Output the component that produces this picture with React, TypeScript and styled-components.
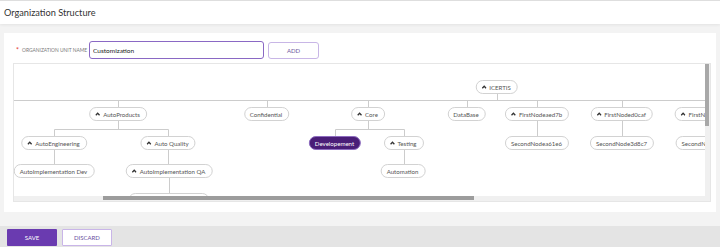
import React, { useLayoutEffect, useRef } from 'react';
import styled, { createGlobalStyle } from 'styled-components';

interface OrgNode {
  id: string;
  label: string;
  x: number;
  level: number;
  parent?: string;
  expandable?: boolean;
  active?: boolean;
}

// top of each tree level inside the chart canvas
const LEVEL_TOP = [16, 43, 72, 100, 129];
const NODE_H = 14;
const CHART_W = 1287;
const CHART_H = 281;
const VIEW_W = 691;
const VIEW_H = 132;
const BAR = 5;
const SCROLL_LEFT = 166;

const nodes: OrgNode[] = [
  { id: 'root', label: 'ICERTIS', x: 648.5, level: 0, expandable: true },
  { id: 'admin', label: 'Administration', x: 95, level: 1, parent: 'root' },
  { id: 'ap', label: 'AutoProducts', x: 270, level: 1, parent: 'root', expandable: true },
  { id: 'conf', label: 'Confidential', x: 418.5, level: 1, parent: 'root' },
  { id: 'core', label: 'Core', x: 520, level: 1, parent: 'root', expandable: true },
  { id: 'db', label: 'DataBase', x: 618.5, level: 1, parent: 'root' },
  { id: 'f1', label: 'FirstNodeaed7b', x: 689, level: 1, parent: 'root', expandable: true },
  { id: 'f2', label: 'FirstNoded0caf', x: 773.5, level: 1, parent: 'root', expandable: true },
  { id: 'f3', label: 'FirstNode5e0b2', x: 859, level: 1, parent: 'root', expandable: true },
  { id: 'f4', label: 'FirstNode7c21f', x: 944, level: 1, parent: 'root', expandable: true },
  { id: 'f5', label: 'FirstNode19be4', x: 1029, level: 1, parent: 'root', expandable: true },
  { id: 'f6', label: 'FirstNode4a6d0', x: 1114, level: 1, parent: 'root', expandable: true },
  { id: 'f7', label: 'FirstNodeb83e1', x: 1199, level: 1, parent: 'root', expandable: true },
  { id: 'ae', label: 'AutoEngineering', x: 206, level: 2, parent: 'ap', expandable: true },
  { id: 'aq', label: 'Auto Quality', x: 320, level: 2, parent: 'ap', expandable: true },
  { id: 'dev', label: 'Developement', x: 487, level: 2, parent: 'core', active: true },
  { id: 'test', label: 'Testing', x: 555.5, level: 2, parent: 'core', expandable: true },
  { id: 's1', label: 'SecondNodea61e6', x: 689, level: 2, parent: 'f1' },
  { id: 's2', label: 'SecondNode3d8c7', x: 774, level: 2, parent: 'f2' },
  { id: 's3', label: 'SecondNode91f3c', x: 859, level: 2, parent: 'f3' },
  { id: 's4', label: 'SecondNode2ad47', x: 944, level: 2, parent: 'f4' },
  { id: 's5', label: 'SecondNode6e0f8', x: 1029, level: 2, parent: 'f5' },
  { id: 's6', label: 'SecondNodec15b9', x: 1114, level: 2, parent: 'f6' },
  { id: 's7', label: 'SecondNode0d7a2', x: 1199, level: 2, parent: 'f7' },
  { id: 'aid', label: 'AutoImplementation Dev', x: 206, level: 3, parent: 'ae' },
  { id: 'aiq', label: 'AutoImplementation QA', x: 321, level: 3, parent: 'aq', expandable: true },
  { id: 'auto', label: 'Automation', x: 555, level: 3, parent: 'test' },
  { id: 'aiu', label: 'AutoImplementation UAT', x: 320.5, level: 4, parent: 'aiq' },
];

const GlobalStyle = createGlobalStyle`
  html, body {
    margin: 0;
    padding: 0;
    background: #f3f3f3;
    font-family: Lato, "Liberation Sans", sans-serif;
    overflow: hidden;
  }
  * { box-sizing: border-box; }
`;

const Page = styled.div`
  width: 720px;
  height: 247px;
  display: flex;
  flex-direction: column;
`;

const Header = styled.header`
  height: 24px;
  border-top: 1px solid #dedede;
  background: #fff;
  box-shadow: 0 1px 3px rgba(0, 0, 0, 0.07);
  padding-left: 4px;
  display: flex;
  align-items: center;
`;

const Title = styled.h1`
  margin: 0;
  font-size: 9.2px;
  font-weight: 400;
  color: #333;
`;

const Card = styled.section`
  margin: 9px 4px 0 4px;
  background: #fff;
  padding: 8px 5px 10px 9px;
  display: flex;
  flex-direction: column;
  gap: 4px;
`;

const FormRow = styled.div`
  display: flex;
  align-items: center;
  padding-left: 3px;
  height: 18px;
`;

const Required = styled.span`
  color: #e53935;
  font-size: 7px;
  margin-right: 3px;
  line-height: 1;
`;

const Label = styled.label`
  font-size: 4.9px;
  color: #7a7a7a;
  text-transform: uppercase;
  margin-right: 2px;
`;

const TextInput = styled.input`
  width: 175px;
  height: 18px;
  border: 1.5px solid #8a68c4;
  border-radius: 3px;
  padding: 0 3px;
  font-family: Lato, sans-serif;
  font-size: 6.5px;
  color: #222;
  outline: none;
`;

const OutlineButton = styled.button<{ $w: number; $h: number }>`
  width: ${(p) => p.$w}px;
  height: ${(p) => p.$h}px;
  background: #fff;
  border: 1px solid #c8b6e6;
  border-radius: 3px;
  color: #6e58a0;
  font-family: Lato, sans-serif;
  font-size: 6px;
  padding: 0;
  margin-left: 4px;
`;

const ChartFrame = styled.div`
  border: 1px solid #e6e6e6;
  display: grid;
  grid-template-columns: ${VIEW_W}px ${BAR}px;
  grid-template-rows: ${VIEW_H}px ${BAR}px;
  width: ${VIEW_W + BAR + 2}px;
`;

const Viewport = styled.div`
  overflow: hidden;
`;

const Track = styled.div`
  position: relative;
  background: #f0f0f0;
`;

const Thumb = styled.div<{ $vertical?: boolean }>`
  position: absolute;
  background: ${(p) => (p.$vertical ? '#a8a8a8' : '#9c9c9c')};
  ${(p) => (p.$vertical ? 'left: 0; right: 1px;' : 'top: 0; bottom: 1px;')}
`;

const Corner = styled.div`
  background: #f0f0f0;
`;

const Canvas = styled.div`
  position: relative;
  width: ${CHART_W}px;
  height: ${CHART_H}px;
`;

const Links = styled.svg`
  position: absolute;
  inset: 0;
`;

const NodePill = styled.div<{ $active?: boolean }>`
  position: absolute;
  transform: translateX(-50%);
  height: ${NODE_H}px;
  padding: 0 6px 0 5px;
  border-radius: 8px;
  display: inline-flex;
  align-items: center;
  gap: 3px;
  white-space: nowrap;
  font-size: 6.1px;
  border: 1px solid ${(p) => (p.$active ? '#8d6cbf' : '#d2d2d2')};
  background: ${(p) => (p.$active ? '#4a1e78' : '#fff')};
  color: ${(p) => (p.$active ? '#fff' : '#555')};
`;

const Footer = styled.footer`
  margin-top: auto;
  height: 21px;
  background: #e4e4e4;
  padding: 3px 7px 0;
  display: flex;
  gap: 5px;
`;

const SaveButton = styled.button`
  width: 50px;
  height: 17px;
  border: none;
  border-radius: 1px;
  background: #6a3bb0;
  color: #fff;
  font-family: Lato, sans-serif;
  font-size: 6px;
  padding: 0;
`;

const DiscardButton = styled(SaveButton)`
  background: #fff;
  border: 1px solid #c9b5e8;
  color: #6a4fa0;
`;

const Caret = () => (
  <svg width="5" height="4" viewBox="0 0 5 4">
    <path d="M0.6 3.2 L2.5 1.2 L4.4 3.2" fill="none" stroke="#333" strokeWidth="1.3" />
  </svg>
);

const px = (v: number) => Math.round(v) + 0.5;

function linkSegments(list: OrgNode[]) {
  const segs: { x1: number; y1: number; x2: number; y2: number }[] = [];
  list.forEach((p) => {
    const kids = list.filter((n) => n.parent === p.id);
    if (!kids.length) return;
    const bottom = LEVEL_TOP[p.level] + NODE_H;
    const childTop = LEVEL_TOP[p.level + 1];
    if (kids.length === 1 && Math.abs(kids[0].x - p.x) < 2) {
      segs.push({ x1: px(p.x), y1: bottom, x2: px(p.x), y2: childTop });
      return;
    }
    const mid = childTop - 7 + 0.5;
    const xs = kids.map((k) => k.x);
    segs.push({ x1: px(p.x), y1: bottom, x2: px(p.x), y2: mid });
    segs.push({ x1: px(Math.min(...xs)), y1: mid, x2: px(Math.max(...xs)), y2: mid });
    kids.forEach((k) => segs.push({ x1: px(k.x), y1: mid, x2: px(k.x), y2: childTop }));
  });
  return segs;
}

const OrgChart: React.FC<{ data: OrgNode[] }> = ({ data }) => {
  const viewRef = useRef<HTMLDivElement>(null);

  useLayoutEffect(() => {
    if (viewRef.current) viewRef.current.scrollLeft = SCROLL_LEFT;
  }, []);

  const hThumb = { left: (SCROLL_LEFT * VIEW_W) / CHART_W, width: (VIEW_W * VIEW_W) / CHART_W };
  const vThumb = { top: 0, height: (VIEW_H * VIEW_H) / CHART_H };

  return (
    <ChartFrame>
      <Viewport ref={viewRef}>
        <Canvas>
          <Links width={CHART_W} height={CHART_H}>
            {linkSegments(data).map((s, i) => (
              <line key={i} {...s} stroke="#cccccc" strokeWidth="1" />
            ))}
          </Links>
          {data.map((n) => (
            <NodePill key={n.id} $active={n.active} style={{ left: n.x, top: LEVEL_TOP[n.level] }}>
              {n.expandable && <Caret />}
              {n.label}
            </NodePill>
          ))}
        </Canvas>
      </Viewport>
      <Track>
        <Thumb $vertical style={vThumb} />
      </Track>
      <Track>
        <Thumb style={hThumb} />
      </Track>
      <Corner />
    </ChartFrame>
  );
};

export default function App() {
  return (
    <Page>
      <GlobalStyle />
      <Header>
        <Title>Organization Structure</Title>
      </Header>
      <Card>
        <FormRow>
          <Required>*</Required>
          <Label htmlFor="unit-name">Organization Unit Name</Label>
          <TextInput id="unit-name" defaultValue="Customization" />
          <OutlineButton $w={51} $h={17}>ADD</OutlineButton>
        </FormRow>
        <OrgChart data={nodes} />
      </Card>
      <Footer>
        <SaveButton>SAVE</SaveButton>
        <DiscardButton>DISCARD</DiscardButton>
      </Footer>
    </Page>
  );
}
